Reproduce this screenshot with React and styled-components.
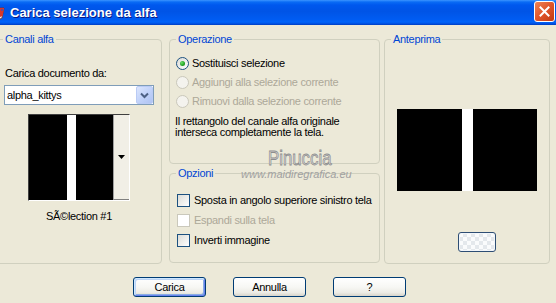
import React from "react";
import styled, { createGlobalStyle } from "styled-components";

const Global = createGlobalStyle`
  html, body { margin: 0; padding: 0; background: #ECE9D8; overflow: hidden; }
  #root { width: 556px; height: 303px; overflow: hidden; }
`;

const Window = styled.div`
  position: relative;
  width: 568px;
  height: 303px;
  margin-left: -12px;
  display: flex;
  flex-direction: column;
  background: #ECE9D8;
  font-family: "Liberation Sans", Arial, sans-serif;
  font-size: 11px;
  letter-spacing: -0.3px;
  color: #000;
`;

const TitleBar = styled.div`
  height: 25px;
  flex: none;
  display: flex;
  align-items: center;
  padding: 0 1px 0 2px;
  box-sizing: border-box;
  background: linear-gradient(
    #3C95FF 0,
    #0A6CF5 2px,
    #0058EE 5px,
    #0054E6 45%,
    #005CF2 78%,
    #0064FA 88%,
    #0050E0 95%,
    #003DC0 100%
  );
  color: #fff;
`;

const TitleIcon = styled.svg`
  width: 16px;
  height: 16px;
  flex: none;
  margin-right: 4px;
`;

const TitleText = styled.div`
  flex: 1;
  font-weight: bold;
  font-size: 13px;
  letter-spacing: 0;
  line-height: 16px;
  text-shadow: 1px 1px 0 #0A1883;
`;

const CloseButton = styled.div`
  width: 21px;
  height: 21px;
  flex: none;
  box-sizing: border-box;
  align-self: flex-start;
  margin-top: 1px;
  border: 1px solid #FFFFFF;
  border-radius: 3px;
  background-color: #D9501F;
  background-image: linear-gradient(135deg, #EE8456 0, #E0552A 50%, #C03A12 100%);
  display: flex;
  align-items: center;
  justify-content: center;
`;

const Content = styled.div`
  display: flex;
  align-items: flex-start;
  padding: 8px 6px 0 8px;
`;

const Column = styled.div`
  display: flex;
  flex-direction: column;
  gap: ${(p) => p.$gap || 0}px;
  margin-left: ${(p) => p.$ml || 0}px;
`;

const Group = styled.fieldset`
  margin: 0;
  padding: 0;
  min-width: 0;
  box-sizing: border-box;
  width: ${(p) => p.$w}px;
  height: ${(p) => p.$h}px;
  border: 1px solid #D0D0BF;
  border-radius: 4px;
`;

const Legend = styled.legend`
  margin-left: 6px;
  padding: 0 2px;
  line-height: 13px;
  color: #0046D5;
`;

const GroupBody = styled.div`
  display: flex;
  flex-direction: column;
  align-items: ${(p) => p.$align || "stretch"};
  padding: ${(p) => p.$pt || 0}px ${(p) => p.$pr || 0}px 0 ${(p) => p.$pl || 0}px;
`;

const Label = styled.div`
  margin-top: ${(p) => p.$mt || 0}px;
  padding-left: 1px;
  line-height: 13px;
  white-space: nowrap;
`;

const Select = styled.div`
  margin-top: 5px;
  height: 20px;
  box-sizing: border-box;
  border: 1px solid #7F9DB9;
  background: #fff;
  display: flex;
  align-items: center;
  padding-left: 2px;
`;

const SelectText = styled.span`
  flex: 1;
  line-height: 13px;
`;

const DropButton = styled.div`
  width: 17px;
  height: 18px;
  box-sizing: border-box;
  border: 1px solid #BACBF5;
  border-radius: 2px;
  background: linear-gradient(135deg, #DCE6FD 0, #C2D3FA 50%, #AFC3F3 100%);
  display: flex;
  align-items: center;
  justify-content: center;
`;

const Thumb = styled.div`
  margin-top: 9px;
  align-self: center;
  width: 102px;
  height: 87px;
  box-sizing: border-box;
  border-style: solid;
  border-width: 1px;
  border-color: #404040 #FFFFFF #FFFFFF #404040;
  display: flex;
`;

const ThumbImage = styled.div`
  flex: 1;
  background: linear-gradient(
    to right,
    #000 0,
    #000 38px,
    #fff 38px,
    #fff 47px,
    #000 47px
  );
`;

const ThumbScroll = styled.div`
  width: 16px;
  flex: none;
  box-sizing: border-box;
  border-left: 1px solid #A0A0A0;
  border-bottom: 1px solid #808080;
  background: #F1EFE6;
  display: flex;
  align-items: center;
  justify-content: center;
`;

const Caption = styled.div`
  margin-top: 9px;
  align-self: center;
  line-height: 13px;
`;

const OptionRow = styled.div`
  display: flex;
  align-items: center;
  height: ${(p) => p.$h}px;
  gap: ${(p) => p.$gap}px;
  color: ${(p) => (p.$disabled ? "#ACA899" : "#000")};
  white-space: nowrap;
  line-height: 13px;
`;

const RadioCircle = styled.span`
  width: 13px;
  height: 13px;
  flex: none;
  box-sizing: border-box;
  border-radius: 50%;
  border: 1px solid ${(p) => (p.$disabled ? "#CAC8BB" : "#1C5180")};
  background: ${(p) =>
    p.$disabled ? "#F4F3EE" : "linear-gradient(135deg, #DCDCD7 0, #FFFFFF 100%)"};
  display: flex;
  align-items: center;
  justify-content: center;
`;

const RadioDot = styled.span`
  width: 5px;
  height: 5px;
  border-radius: 50%;
  background: radial-gradient(circle at 35% 35%, #6BE06A 0, #21A121 60%, #1A7E1A 100%);
`;

const CheckBox = styled.span`
  width: 13px;
  height: 13px;
  flex: none;
  box-sizing: border-box;
  border: 1px solid ${(p) => (p.$disabled ? "#CAC8BB" : "#1C5180")};
  background: ${(p) =>
    p.$disabled ? "#FFFFFF" : "linear-gradient(135deg, #DCDCD7 0, #FFFFFF 100%)"};
`;

const Paragraph = styled.div`
  margin: 5px 0 0 -1px;
  line-height: 11px;
`;

const Preview = styled.div`
  margin-top: 63px;
  width: 140px;
  height: 82px;
  background: linear-gradient(
    to right,
    #000 0,
    #000 65px,
    #fff 65px,
    #fff 76px,
    #000 76px
  );
`;

const SmallButton = styled.div`
  margin-top: 41px;
  margin-left: 19px;
  width: 38px;
  height: 20px;
  box-sizing: border-box;
  border: 1px solid #2E4E74;
  border-radius: 3px;
  background:
    repeating-conic-gradient(#E4E8EC 0 25%, #FAFBFC 0 50%) 0 0 / 8px 8px;
  box-shadow: inset 0 0 0 1px #F2F6FA;
`;

const ButtonRow = styled.div`
  display: flex;
  gap: 27px;
  margin-top: 13px;
  padding-left: 145px;
`;

const Button = styled.div`
  width: 73px;
  height: 20px;
  box-sizing: border-box;
  border: 1px solid #003C74;
  border-radius: 3px;
  background: linear-gradient(#FFFFFF 0, #F7F7F4 50%, #EDECE6 80%, #D8D4CA 100%);
  display: flex;
  align-items: center;
  justify-content: center;
  line-height: 13px;
  box-shadow: ${(p) =>
    p.$default
      ? "inset 1px 1px 0 #CEE7FF, inset -1px -1px 0 #6982EE, inset 2px 2px 0 #BCD4F6, inset -2px -2px 0 #89ADE4"
      : "none"};
`;

const WatermarkName = styled.div`
  position: absolute;
  left: 280px;
  top: 147px;
  font-size: 21px;
  line-height: 21px;
  letter-spacing: 0;
  color: #DADADA;
  -webkit-text-stroke: 0.8px #8E8E8E;
  transform: scaleX(0.8);
  transform-origin: left top;
  pointer-events: none;
`;

const WatermarkUrl = styled.div`
  position: absolute;
  left: 253px;
  top: 169px;
  font-size: 11px;
  line-height: 11px;
  font-style: italic;
  letter-spacing: 0;
  color: #A0A0A0;
  pointer-events: none;
`;

function Radio({ label, checked, disabled }) {
  return (
    <OptionRow $h={19} $gap={3} $disabled={disabled}>
      <RadioCircle $disabled={disabled}>{checked && <RadioDot />}</RadioCircle>
      <span>{label}</span>
    </OptionRow>
  );
}

function Check({ label, disabled }) {
  return (
    <OptionRow $h={20} $gap={4} $disabled={disabled}>
      <CheckBox $disabled={disabled} />
      <span>{label}</span>
    </OptionRow>
  );
}

export default function App() {
  return (
    <>
      <Global />
      <Window>
        <TitleBar>
          <TitleIcon viewBox="0 0 16 16">
            <path d="M2 3 L14 3 L12 13 L8 15 L4 13 Z" fill="#F4F4F4" stroke="#7A2A20" strokeWidth="0.8" />
            <path d="M10 3 L14 3 L12.5 11 L10 12 Z" fill="#D9352A" />
            <path d="M11 5 L13.2 5" stroke="#2B56C8" strokeWidth="1.2" />
          </TitleIcon>
          <TitleText>Carica selezione da alfa</TitleText>
          <CloseButton>
            <svg width="13" height="13" viewBox="0 0 13 13">
              <path d="M2.5 2.5 L10.5 10.5 M10.5 2.5 L2.5 10.5" stroke="#fff" strokeWidth="2" strokeLinecap="square" />
            </svg>
          </CloseButton>
        </TitleBar>

        <Content>
          <Group $w={167} $h={231}>
            <Legend>Canali alfa</Legend>
            <GroupBody $pl={7} $pr={7}>
              <Label $mt={21}>Carica documento da:</Label>
              <Select>
                <SelectText>alpha_kittys</SelectText>
                <DropButton>
                  <svg width="9" height="7" viewBox="0 0 9 7">
                    <path d="M1 1.5 L4.5 5 L8 1.5" stroke="#4D6185" strokeWidth="2" fill="none" />
                  </svg>
                </DropButton>
              </Select>
              <Thumb>
                <ThumbImage />
                <ThumbScroll>
                  <svg width="7" height="4" viewBox="0 0 7 4">
                    <path d="M0 0 L7 0 L3.5 4 Z" fill="#000" />
                  </svg>
                </ThumbScroll>
              </Thumb>
              <Caption>SÃ©lection #1</Caption>
            </GroupBody>
          </Group>

          <Column $ml={7} $gap={3}>
            <Group $w={211} $h={131}>
              <Legend>Operazione</Legend>
              <GroupBody $pt={8} $pl={6} $pr={4}>
                <Radio label="Sostituisci selezione" checked />
                <Radio label="Aggiungi alla selezione corrente" disabled />
                <Radio label="Rimuovi dalla selezione corrente" disabled />
                <Paragraph>
                  Il rettangolo del canale alfa originale
                  <br />
                  interseca completamente la tela.
                </Paragraph>
              </GroupBody>
            </Group>
            <Group $w={211} $h={96}>
              <Legend>Opzioni</Legend>
              <GroupBody $pt={10} $pl={7} $pr={4}>
                <Check label="Sposta in angolo superiore sinistro tela" />
                <Check label="Espandi sulla tela" disabled />
                <Check label="Inverti immagine" />
              </GroupBody>
            </Group>
          </Column>

          <Column $ml={4}>
            <Group $w={166} $h={231}>
              <Legend>Anteprima</Legend>
              <GroupBody $align="center">
                <Preview />
                <SmallButton />
              </GroupBody>
            </Group>
          </Column>
        </Content>

        <ButtonRow>
          <Button $default>Carica</Button>
          <Button>Annulla</Button>
          <Button>?</Button>
        </ButtonRow>

        <WatermarkName>Pinuccia</WatermarkName>
        <WatermarkUrl>www.maidiregrafica.eu</WatermarkUrl>
      </Window>
    </>
  );
}
